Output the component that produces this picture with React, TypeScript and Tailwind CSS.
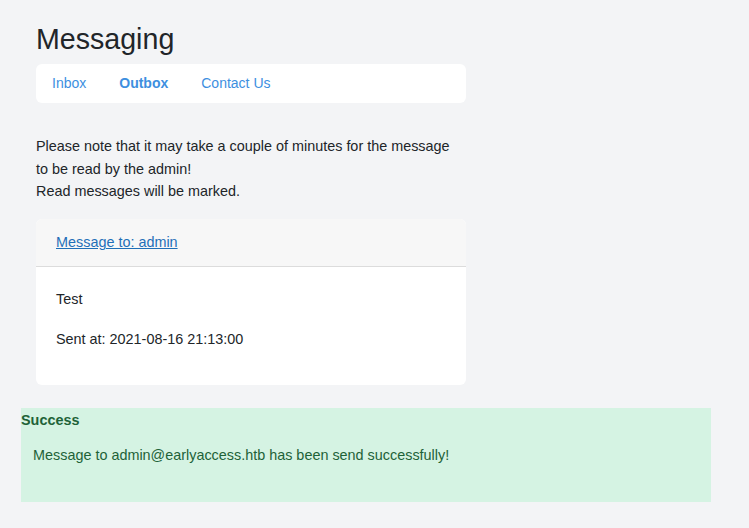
import React from 'react';

const App: React.FC = () => {
  return (
    <div className="min-h-screen bg-[#f3f4f6] text-[#212529] font-['Liberation_Sans',Arial,sans-serif] text-[14.4px]">
      <div className="pl-[36px] pt-[22px] w-[466px]">
        <h1 className="text-[28.6px] leading-[34px] text-[#212529]">Messaging</h1>
        <nav className="mt-[8px] h-[39px] bg-white rounded-[6px] flex items-center gap-[33px] px-[16px] text-[#3d8fdf] text-[14px]">
          <a href="#">Inbox</a>
          <a href="#" className="font-bold">Outbox</a>
          <a href="#">Contact Us</a>
        </nav>

        <p className="mt-[32px] w-[420px] leading-[22.5px]">
          Please note that it may take a couple of minutes for the message to be read by the admin!
          <br />
          Read messages will be marked.
        </p>

        <div className="mt-[16px] bg-white rounded-[6px] overflow-hidden">
          <div className="h-[48px] bg-[#f7f7f7] border-b border-[#dcdcdc] flex items-center px-[20px] pt-[2px]">
            <a href="#" className="text-[#1f6fb8] underline">Message to: admin</a>
          </div>
          <div className="px-[20px] pt-[22px] pb-[36px]">
            <p className="leading-[20px]">Test</p>
            <p className="mt-[20px] leading-[20px]">Sent at: 2021-08-16 21:13:00</p>
          </div>
        </div>
      </div>

      <div className="ml-[21px] mt-[23px] w-[690px] h-[94px] bg-[#d5f3e3] text-[#1e6238]">
        <div className="pt-[3px] font-bold leading-[18px]">Success</div>
        <div className="mt-[17px] pl-[12px] leading-[18px]">Message to admin@earlyaccess.htb has been send successfully!</div>
      </div>
    </div>
  );
};

export default App;
